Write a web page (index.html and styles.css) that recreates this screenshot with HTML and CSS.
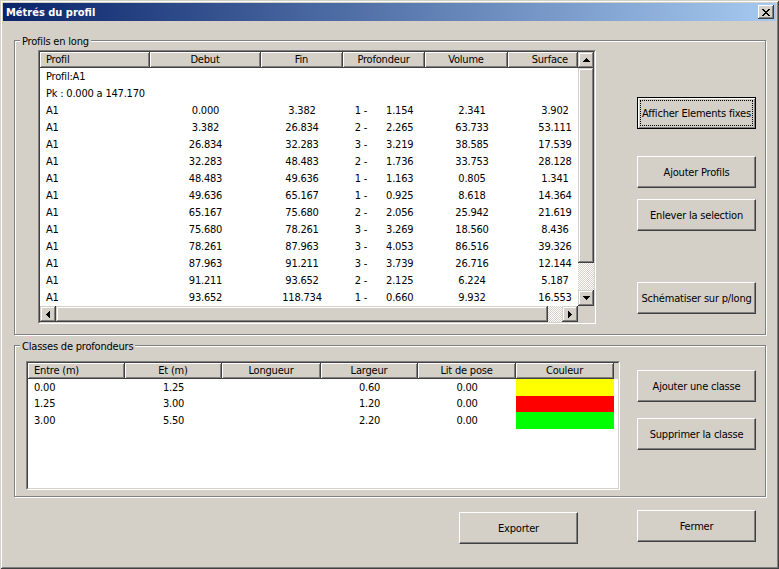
FILE: index.html
```html
<!DOCTYPE html>
<html lang="fr">
<head>
<meta charset="utf-8">
<title>Métrés du profil</title>
<link rel="stylesheet" href="styles.css">
</head>
<body>
<div class="window">
  <header class="titlebar">
    <span class="title">Métrés du profil</span>
    <span class="close"><svg width="8" height="7" viewBox="0 0 8 7"><path d="M0 0h2v1H0zM6 0h2v1H6zM1 1h2v1H1zM5 1h2v1H5zM2 2h4v1H2zM3 3h2v1H3zM2 4h4v1H2zM1 5h2v1H1zM5 5h2v1H5zM0 6h2v1H0zM6 6h2v1H6z"/></svg></span>
  </header>
  <main class="content">
    <section class="group g1">
      <div class="group-title">Profils en long</div>
      <div class="group-body g1-body">
        <div class="lv lv1">
          <div class="lv-in">
            <div class="main">
              <div class="hdr">
                <div class="hc h1 left">Profil</div>
                <div class="hc h2">Debut</div>
                <div class="hc h3">Fin</div>
                <div class="hc h4">Profondeur</div>
                <div class="hc h5">Volume</div>
                <div class="hc h6 right">Surface</div>
              </div>
              <div class="r"><div class="span">Profil:A1</div></div>
              <div class="r"><div class="span">Pk : 0.000 a 147.170</div></div>
              <div class="r"><div class="c c1">A1</div><div class="c c2">0.000</div><div class="c c3">3.382</div><div class="c c4"><span class="pf"><span>1 -</span><span>1.154</span></span></div><div class="c c5">2.341</div><div class="c c6">3.902</div></div>
              <div class="r"><div class="c c1">A1</div><div class="c c2">3.382</div><div class="c c3">26.834</div><div class="c c4"><span class="pf"><span>2 -</span><span>2.265</span></span></div><div class="c c5">63.733</div><div class="c c6">53.111</div></div>
              <div class="r"><div class="c c1">A1</div><div class="c c2">26.834</div><div class="c c3">32.283</div><div class="c c4"><span class="pf"><span>3 -</span><span>3.219</span></span></div><div class="c c5">38.585</div><div class="c c6">17.539</div></div>
              <div class="r"><div class="c c1">A1</div><div class="c c2">32.283</div><div class="c c3">48.483</div><div class="c c4"><span class="pf"><span>2 -</span><span>1.736</span></span></div><div class="c c5">33.753</div><div class="c c6">28.128</div></div>
              <div class="r"><div class="c c1">A1</div><div class="c c2">48.483</div><div class="c c3">49.636</div><div class="c c4"><span class="pf"><span>1 -</span><span>1.163</span></span></div><div class="c c5">0.805</div><div class="c c6">1.341</div></div>
              <div class="r"><div class="c c1">A1</div><div class="c c2">49.636</div><div class="c c3">65.167</div><div class="c c4"><span class="pf"><span>1 -</span><span>0.925</span></span></div><div class="c c5">8.618</div><div class="c c6">14.364</div></div>
              <div class="r"><div class="c c1">A1</div><div class="c c2">65.167</div><div class="c c3">75.680</div><div class="c c4"><span class="pf"><span>2 -</span><span>2.056</span></span></div><div class="c c5">25.942</div><div class="c c6">21.619</div></div>
              <div class="r"><div class="c c1">A1</div><div class="c c2">75.680</div><div class="c c3">78.261</div><div class="c c4"><span class="pf"><span>3 -</span><span>3.269</span></span></div><div class="c c5">18.560</div><div class="c c6">8.436</div></div>
              <div class="r"><div class="c c1">A1</div><div class="c c2">78.261</div><div class="c c3">87.963</div><div class="c c4"><span class="pf"><span>3 -</span><span>4.053</span></span></div><div class="c c5">86.516</div><div class="c c6">39.326</div></div>
              <div class="r"><div class="c c1">A1</div><div class="c c2">87.963</div><div class="c c3">91.211</div><div class="c c4"><span class="pf"><span>3 -</span><span>3.739</span></span></div><div class="c c5">26.716</div><div class="c c6">12.144</div></div>
              <div class="r"><div class="c c1">A1</div><div class="c c2">91.211</div><div class="c c3">93.652</div><div class="c c4"><span class="pf"><span>2 -</span><span>2.125</span></span></div><div class="c c5">6.224</div><div class="c c6">5.187</div></div>
              <div class="r"><div class="c c1">A1</div><div class="c c2">93.652</div><div class="c c3">118.734</div><div class="c c4"><span class="pf"><span>1 -</span><span>0.660</span></span></div><div class="c c5">9.932</div><div class="c c6">16.553</div></div>
            </div>
            <div class="vs">
              <div class="sbb"><svg width="7" height="4" viewBox="0 0 7 4"><path d="M3 0h1v1H3zM2 1h3v1H2zM1 2h5v1H1zM0 3h7v1H0z"/></svg></div>
              <div class="thumb-v raised"></div>
              <div class="track"></div>
              <div class="sbb"><svg width="7" height="4" viewBox="0 0 7 4"><path d="M0 0h7v1H0zM1 1h5v1H1zM2 2h3v1H2zM3 3h1v1H3z"/></svg></div>
            </div>
            <div class="hs">
              <div class="sbb"><svg width="4" height="7" viewBox="0 0 4 7"><path d="M3 0h1v7H3zM2 1h1v5H2zM1 2h1v3H1zM0 3h1v1H0z"/></svg></div>
              <div class="thumb-h raised"></div>
              <div class="track"></div>
              <div class="sbb"><svg width="4" height="7" viewBox="0 0 4 7"><path d="M0 0h1v7H0zM1 1h1v5H1zM2 2h1v3H2zM3 3h1v1H3z"/></svg></div>
            </div>
            <div class="corner"></div>
          </div>
        </div>
        <div class="side side1">
          <button class="btn default">Afficher Elements fixes</button>
          <button class="btn b2">Ajouter Profils</button>
          <button class="btn b3">Enlever la selection</button>
          <button class="btn b4">Schématiser sur p/long</button>
        </div>
      </div>
    </section>

    <section class="group g2">
      <div class="group-title">Classes de profondeurs</div>
      <div class="group-body g2-body">
        <div class="lv lv2">
          <div class="lv-in">
            <div class="hdr">
              <div class="hc e1 left">Entre (m)</div>
              <div class="hc e2">Et (m)</div>
              <div class="hc e3">Longueur</div>
              <div class="hc e4">Largeur</div>
              <div class="hc e5">Lit de pose</div>
              <div class="hc e6">Couleur</div>
              <div class="hfill"></div>
            </div>
            <div class="r2"><div class="d d1">0.00</div><div class="d d2">1.25</div><div class="d d3"></div><div class="d d4">0.60</div><div class="d d5">0.00</div><div class="d d6 yellow"></div></div>
            <div class="r2 short"><div class="d d1">1.25</div><div class="d d2">3.00</div><div class="d d3"></div><div class="d d4">1.20</div><div class="d d5">0.00</div><div class="d d6 red"></div></div>
            <div class="r2"><div class="d d1">3.00</div><div class="d d2">5.50</div><div class="d d3"></div><div class="d d4">2.20</div><div class="d d5">0.00</div><div class="d d6 green"></div></div>
          </div>
        </div>
        <div class="side side2">
          <button class="btn">Ajouter une classe</button>
          <button class="btn">Supprimer la classe</button>
        </div>
      </div>
    </section>

    <div class="footer">
      <button class="btn export">Exporter</button>
      <button class="btn close-btn">Fermer</button>
    </div>
  </main>
</div>
</body>
</html>
```
FILE: styles.css
```css
* { box-sizing: border-box; }

html, body { margin: 0; padding: 0; }

body {
  width: 779px;
  height: 569px;
  overflow: hidden;
  background: #D4D0C8;
  font-family: "DejaVu Sans Condensed", "DejaVu Sans", sans-serif;
  font-size: 11px;
  letter-spacing: -0.2px;
  color: #000;
}

.window {
  width: 779px;
  height: 569px;
  padding: 3px;
  background: #D4D0C8;
  box-shadow: inset 1px 1px 0 #D4D0C8, inset -1px -1px 0 #404040,
              inset 2px 2px 0 #fff, inset -2px -2px 0 #808080;
}

.titlebar {
  height: 18px;
  display: flex;
  align-items: center;
  justify-content: space-between;
  padding: 0 2px 0 3px;
  background: linear-gradient(90deg, #0A246A, #A6CAF0);
}

.title {
  color: #fff;
  font-weight: bold;
  letter-spacing: 0;
  line-height: 13px;
}

.close {
  width: 16px;
  height: 14px;
  display: flex;
  align-items: center;
  justify-content: center;
  background: #D4D0C8;
  box-shadow: inset -1px -1px 0 #404040, inset 1px 1px 0 #fff, inset -2px -2px 0 #808080;
}

.close svg, .sbb svg { display: block; }

.content { padding: 19px 0 0 11px; }

.group {
  width: 752px;
  border: 1px solid #808080;
  box-shadow: inset 1px 1px 0 #fff, 1px 1px 0 #fff;
}

.g1 { height: 295px; }
.g2 { height: 152px; margin-top: 10px; }

.group-title {
  width: max-content;
  margin: -6px 0 0 5px;
  padding: 0 2px;
  line-height: 13px;
  background: #D4D0C8;
}

.group-body { display: flex; align-items: flex-start; }
.g1-body { margin-top: 2px; padding-left: 23px; }
.g2-body { margin-top: 8px; padding-left: 11px; }

/* list views */
.lv {
  flex: none;
  border: 1px solid;
  border-color: #808080 #fff #fff #808080;
}

.lv-in {
  height: 100%;
  border: 1px solid;
  border-color: #404040 #D4D0C8 #D4D0C8 #404040;
  background: #fff;
}

.lv1 { width: 558px; height: 274px; }
.lv1 .lv-in {
  display: grid;
  grid-template-columns: 538px 16px;
  grid-template-rows: 254px 16px;
}

.main { overflow: hidden; }

.hdr {
  display: flex;
  height: 16px;
  background: #D4D0C8;
}

.hc {
  flex: none;
  height: 16px;
  padding: 1px 6px 0;
  line-height: 14px;
  text-align: center;
  white-space: nowrap;
  overflow: hidden;
  border-right: 1px solid #404040;
  border-bottom: 1px solid #404040;
  box-shadow: inset 1px 1px 0 #fff, inset -1px -1px 0 #808080;
}

.hc.left { text-align: left; }
.hc.right { text-align: right; padding-right: 9px; }

.h1 { width: 110px; }
.h2 { width: 111px; }
.h3 { width: 82px; }
.h4 { width: 82px; }
.h5 { width: 83px; }
.h6 { width: 70px; }

.r {
  display: flex;
  height: 17px;
  line-height: 17px;
  white-space: nowrap;
}

.span { padding-left: 6px; }

.c { flex: none; text-align: center; }
.c1 { width: 110px; padding-left: 6px; text-align: left; }
.c2 { width: 111px; }
.c3 { width: 82px; }
.c4 { width: 82px; }
.c5 { width: 83px; padding-left: 11px; }
.c6 { width: 70px; padding-left: 24px; }

.pf { display: inline-flex; gap: 19px; }

/* scrollbars */
.raised, .sbb {
  background: #D4D0C8;
  box-shadow: inset -1px -1px 0 #404040, inset 1px 1px 0 #D4D0C8,
              inset -2px -2px 0 #808080, inset 2px 2px 0 #fff;
}

.sbb {
  flex: none;
  width: 16px;
  height: 16px;
  display: flex;
  align-items: center;
  justify-content: center;
}

.vs { display: flex; flex-direction: column; }
.hs { display: flex; }

.thumb-v { flex: none; width: 16px; height: 195px; }
.thumb-h { flex: none; width: 492px; height: 16px; }

.track {
  flex: 1;
  background: repeating-conic-gradient(#fff 0 25%, #D4D0C8 0 50%) 0 0 / 2px 2px;
}

.corner { background: #D4D0C8; }

/* second list */
.lv2 { width: 594px; height: 129px; }
.lv2 .lv-in { display: flex; flex-direction: column; }

.e1 { width: 97px; }
.e2 { width: 97px; }
.e3 { width: 99px; }
.e4 { width: 97px; }
.e5 { width: 98px; }
.e6 { width: 98px; }
.hfill { flex: 1; background: #D4D0C8; }

.r2 {
  display: flex;
  height: 17px;
  line-height: 17px;
  white-space: nowrap;
}
.r2.short { height: 16px; line-height: 16px; }

.d { flex: none; text-align: center; }
.d1 { width: 97px; padding-left: 6px; text-align: left; }
.d2 { width: 97px; }
.d3 { width: 99px; }
.d4 { width: 97px; }
.d5 { width: 98px; }
.d6 { width: 98px; }

.yellow { background: #FFFF00; }
.red { background: #FF0000; }
.green { background: #00FF00; }

/* buttons */
.btn {
  flex: none;
  width: 119px;
  height: 32px;
  margin: 0;
  padding: 0;
  display: flex;
  align-items: center;
  justify-content: center;
  font: inherit;
  letter-spacing: inherit;
  color: #000;
  white-space: nowrap;
  background: #D4D0C8;
  border: 1px solid;
  border-color: #fff #404040 #404040 #fff;
  border-radius: 0;
  box-shadow: inset -1px -1px 0 #808080;
}

.btn.default {
  border-color: #000;
  box-shadow: inset 1px 1px 0 #fff, inset -1px -1px 0 #808080;
  outline: 1px dotted #000;
  outline-offset: -4px;
}

.side { display: flex; flex-direction: column; }
.side1 { margin-left: 41px; padding-top: 47px; }
.side1 .b2 { margin-top: 27px; }
.side1 .b3 { margin-top: 11px; }
.side1 .b4 { margin-top: 51px; }

.side2 { margin-left: 17px; padding-top: 9px; gap: 16px; }

.footer {
  display: flex;
  align-items: flex-start;
  margin-top: 13px;
  padding-left: 445px;
}

.footer .export { margin-top: 2px; }
.footer .close-btn { margin-left: 59px; }
```
